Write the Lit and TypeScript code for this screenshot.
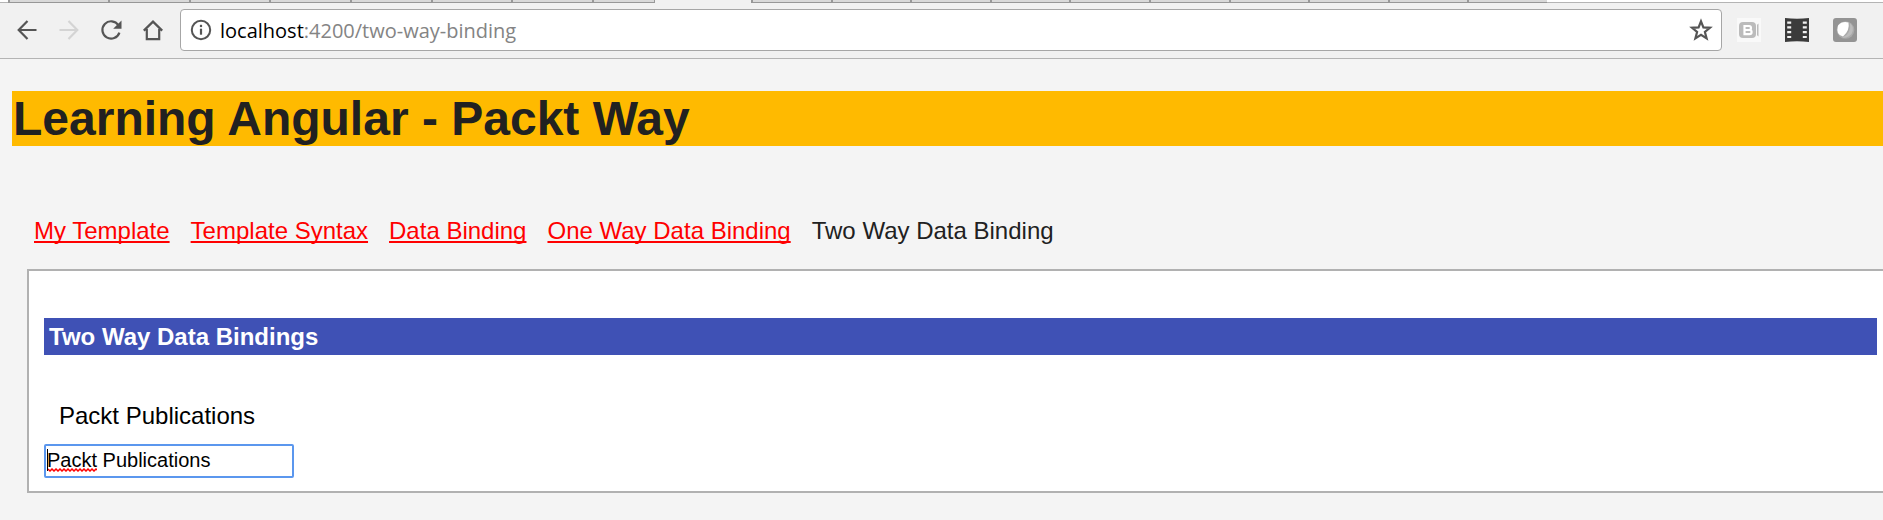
import { LitElement, html, css, svg } from "lit";
import { customElement, state } from "lit/decorators.js";

@customElement("browser-bar")
export class BrowserBar extends LitElement {
  static styles = css`
    :host {
      display: block;
      background: #f1f1f1;
      border-bottom: 1px solid #b4b4b4;
    }
    .strip {
      display: flex;
      height: 3px;
      background: #fff;
    }
    .tab {
      box-sizing: border-box;
      flex: 1;
      background: #d9d9d9;
      border-bottom: 1px solid #979797;
    }
    .tab::before {
      content: "";
      display: block;
      width: 2px;
      height: 2px;
      background: #999;
    }
    .edge {
      flex: none;
      width: 8px;
      box-sizing: border-box;
      border-bottom: 1px solid #b4b4b4;
    }
    .first { flex: none; width: 100px; }
    .group { display: flex; flex: none; width: 484px; }
    .group.after { width: 796px; }
    .last {
      flex: none;
      width: 62px;
    }
    .active {
      flex: none;
      width: 97px;
      background: #f1f1f1;
      border-left: 1px solid #999;
      box-sizing: border-box;
    }
    .rest {
      flex: 1;
      box-sizing: border-box;
      border-bottom: 1px solid #b4b4b4;
    }
    .tools {
      display: flex;
      align-items: center;
      padding: 6px 26px 7px 15px;
    }
    .nav {
      display: flex;
      gap: 18px;
      margin-right: 15px;
    }
    button {
      display: block;
      flex: none;
      padding: 0;
      border: 0;
      background: none;
      width: 24px;
      height: 24px;
      color: #555;
    }
    .off { color: #d4d4d4; }
    svg { display: block; }
    .omnibox {
      flex: 1;
      display: flex;
      align-items: center;
      box-sizing: border-box;
      height: 42px;
      padding: 0 8px;
      background: #fff;
      border: 1px solid #a6a6a6;
      border-radius: 4px;
    }
    .url {
      flex: 1;
      margin-left: 7px;
      padding-top: 2px;
      font: 20px/28px "Open Sans", "Noto Sans", sans-serif;
      color: #848484;
      text-decoration: none;
    }
    .host { color: #000; }
    .ext {
      display: flex;
      gap: 24px;
      margin-left: 15px;
    }
  `;

  private icon(body: unknown) {
    return html`<svg width="24" height="24" viewBox="0 0 24 24" fill="none" stroke="currentColor" stroke-width="2" aria-hidden="true">${body}</svg>`;
  }

  render() {
    return html`
      <div class="strip">
        <div class="edge"></div>
        <div class="tab first"></div>
        <div class="group">${Array.from({ length: 6 }, () => html`<div class="tab"></div>`)}</div>
        <div class="tab last"></div>
        <div class="active"></div>
        <div class="group after">${Array.from({ length: 10 }, () => html`<div class="tab"></div>`)}</div>
        <div class="rest"></div>
      </div>
      <div class="tools">
        <div class="nav">
          <button aria-label="Back">${this.icon(svg`<path d="M21.500 12H4M12.500 3L3.700 12l8.800 9" stroke-width="2.200"/>`)}</button>
          <button class="off" aria-label="Forward">${this.icon(svg`<path d="M2.500 12H20M11.500 3l8.800 9-8.800 9" stroke-width="2.200"/>`)}</button>
          <button aria-label="Reload">${this.icon(svg`<path d="M19.400 7.200A8.700 8.700 0 1 0 20.400 14.600" stroke-width="2.200"/><path d="M22.500 2.500v8.300h-8.300z" fill="currentColor" stroke="none"/>`)}</button>
          <button aria-label="Home">${this.icon(svg`<path d="M2.800 12.600L12 3.600l9.200 9M5.800 11v10.200h12.400V11" stroke-width="2.200"/>`)}</button>
        </div>
        <div class="omnibox">
          <button aria-label="Site information">${this.icon(svg`<circle cx="12" cy="12" r="9.200"/><path d="M12 10.700v6" stroke-width="2.200"/><path d="M12 6.800v2.300" stroke-width="2.200"/>`)}</button>
          <a class="url" href="#two-way"><span class="host">localhost</span>:4200/two-way-binding</a>
          <button aria-label="Bookmark">${this.icon(svg`<path d="M12 3.300l2.400 6.100 6.600.4-5.100 4.200 1.700 6.400L12 16.900l-5.600 3.500 1.700-6.400L3 9.800l6.600-.4z" stroke-width="2.200"/>`)}</button>
        </div>
        <div class="ext">
          <button aria-label="Recorder extension">${this.icon(svg`
            <rect width="24" height="24" fill="#f9f9f9" stroke="none"/>
            <rect x="2" y="4" width="17" height="16" rx="4" fill="#bbb" stroke="none"/>
            <path d="M7.500 8h4.500a2 2 0 0 1 0 4H7.500zM7.500 12h5a2 2 0 0 1 0 4.200H7.500z" stroke="#fff" stroke-width="2.200"/>
            <path d="M18 8.500l3.500-3v13l-3.500-3z" fill="#bbb" stroke="none"/>
            <path d="M19.500 5v14" stroke="#f9f9f9" stroke-width="1"/>`)}</button>
          <button aria-label="Video extension">${this.icon(svg`
            <path d="M0 0q12 1.500 24 0v24q-12-1.500-24 0z" fill="#3b3b3b" stroke="none"/>
            <path d="M4.200 3.500v18M19.800 3.500v18" stroke="#f1f1f1" stroke-width="4" stroke-dasharray="2.200 2.600"/>`)}</button>
          <button aria-label="Shield extension">${this.icon(svg`
            <rect width="24" height="24" rx="3" fill="#949494" stroke="none"/>
            <circle cx="12.500" cy="12" r="8.800" fill="#aaa" stroke="none"/>
            <path d="M17 5q5 5 1.500 11-4 4.500-9 3.500 9-4 7.500-14.500z" fill="#bdbdbd" stroke="none"/>
            <path d="M5 7.500Q9 2.800 15.500 4.500q1.500 8-5.500 14Q2.500 17 5 7.500z" fill="#fff" stroke="none"/>`)}</button>
        </div>
      </div>
    `;
  }
}

@customElement("app-root")
export class AppRoot extends LitElement {
  @state() private value = "Packt Publications";

  static styles = css`
    :host {
      display: block;
      min-height: 100vh;
      overflow: hidden;
      background: #f4f4f4;
      color: #212121;
      font: 24px/27px "Liberation Sans", Arial, sans-serif;
    }
    h1 {
      margin: 32px 0 0 12px;
      padding-left: 1px;
      background: #ffba00;
      font-size: 48px;
      line-height: 55px;
    }
    nav {
      display: flex;
      flex-wrap: wrap;
      gap: 21px;
      margin: 71px 0 25px 34px;
    }
    nav a {
      color: #f00;
      text-decoration-thickness: 2px;
      text-underline-offset: 2px;
      text-decoration-skip-ink: none;
    }
    nav a[aria-current] {
      color: inherit;
      text-decoration: none;
    }
    .panel {
      margin: 0 -11px 0 27px;
      padding: 47px 15px 13px;
      border: 2px solid #b1b1b1;
      background: #fff;
    }
    h2 {
      margin: 0;
      padding: 5px;
      background: #3f51b5;
      color: #fff;
      font-size: 24px;
      line-height: 27px;
    }
    label {
      display: block;
      margin: 47px 0 15px 15px;
      color: #000;
    }
    .field {
      position: relative;
      width: 250px;
    }
    input {
      display: block;
      box-sizing: border-box;
      width: 100%;
      height: 34px;
      padding: 0 1px 1px;
      border: 2px solid #5b97ee;
      border-radius: 2px;
      outline: none;
      background: #fff;
      color: #000;
      font: 20px "Liberation Sans", Arial, sans-serif;
    }
    .caret {
      position: absolute;
      left: 3px;
      top: 5px;
      width: 1px;
      height: 22px;
      background: #000;
    }
    .wave {
      position: absolute;
      left: 4px;
      top: 24px;
    }
  `;

  render() {
    const links = ["My Template", "Template Syntax", "Data Binding", "One Way Data Binding"];
    return html`
      <browser-bar></browser-bar>
      <h1>Learning Angular - Packt Way</h1>
      <nav>
        ${links.map((t) => html`<a href="#${t}">${t}</a>`)}
        <a aria-current="page">Two Way Data Binding</a>
      </nav>
      <section class="panel">
        <h2>Two Way Data Bindings</h2>
        <label for="publisher">${this.value}</label>
        <div class="field">
          <input id="publisher" type="text" .value=${this.value}
            @input=${(e: Event) => (this.value = (e.target as HTMLInputElement).value)} />
          <span class="caret"></span>
          <svg class="wave" width="49" height="4" viewBox="0 0 49 4" aria-hidden="true">
            <path d="M0 1l2 2 2-2 2 2 2-2 2 2 2-2 2 2 2-2 2 2 2-2 2 2 2-2 2 2 2-2 2 2 2-2 2 2 2-2 2 2 2-2 2 2 2-2 2 2 2-2 1 1" fill="none" stroke="#f00" stroke-width="1.500"/>
          </svg>
        </div>
      </section>
    `;
  }
}
